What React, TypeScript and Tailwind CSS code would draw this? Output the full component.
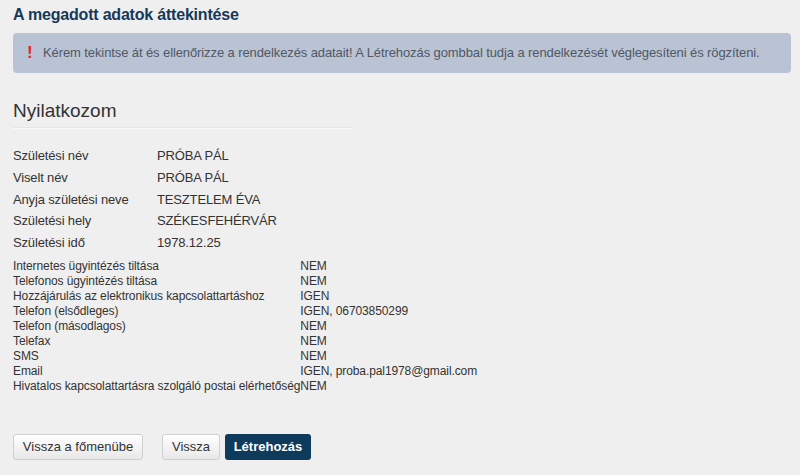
export default function App() {
  const personal = [
    ["Születési név", "PRÓBA PÁL"],
    ["Viselt név", "PRÓBA PÁL"],
    ["Anyja születési neve", "TESZTELEM ÉVA"],
    ["Születési hely", "SZÉKESFEHÉRVÁR"],
    ["Születési idő", "1978.12.25"],
  ];

  const contact = [
    ["Internetes ügyintézés tiltása", "NEM"],
    ["Telefonos ügyintézés tiltása", "NEM"],
    ["Hozzájárulás az elektronikus kapcsolattartáshoz", "IGEN"],
    ["Telefon (elsődleges)", "IGEN, 06703850299"],
    ["Telefon (másodlagos)", "NEM"],
    ["Telefax", "NEM"],
    ["SMS", "NEM"],
    ["Email", "IGEN, proba.pal1978@gmail.com"],
    ["Hivatalos kapcsolattartásra szolgáló postai elérhetőség", "NEM"],
  ];

  return (
    <div className="min-h-[475px] w-[800px] bg-[#efefef] px-[13px] pt-[5px] font-['Liberation_Sans',Arial,sans-serif] text-[#333]">
      <h1 className="text-[16px] font-bold leading-[20px] tracking-[-0.2px] text-[#15395a]">
        A megadott adatok áttekintése
      </h1>

      <div className="mt-[8px] flex h-[40px] w-[778px] items-center rounded-[4px] bg-[#bac3d4] pl-[14px] text-[13px] tracking-[-0.1px] text-[#4f5864]">
        <span className="w-[16px] text-[17px] font-bold text-[#e3262d]">!</span>
        <span>
          Kérem tekintse át és ellenőrizze a rendelkezés adatait! A Létrehozás gombbal tudja a rendelkezését véglegesíteni és rögzíteni.
        </span>
      </div>

      <h2 className="mt-[27px] text-[19px] leading-[21px] text-[#333]">Nyilatkozom</h2>
      <div className="mt-[6px] w-[339px] border-t border-[#e6e6e6] border-b border-b-[#f9f9f9]" />

      <div className="mt-[16px] text-[13px] tracking-[-0.15px]">
        {personal.map(([label, value]) => (
          <div key={label} className="flex leading-[21.75px]">
            <div className="w-[144px]">{label}</div>
            <div>{value}</div>
          </div>
        ))}
      </div>

      <div className="mt-[5px] grid w-fit grid-cols-[auto_auto] text-[12px] leading-[15px] tracking-[-0.1px]">
        {contact.map(([label, value]) => (
          <div key={label} className="contents">
            <div>{label}</div>
            <div>{value}</div>
          </div>
        ))}
      </div>

      <div className="mt-[40px] flex items-center text-[13px]">
        <button className="h-[26px] w-[130px] rounded-[3px] border border-[#cfcfcf] bg-gradient-to-b from-white to-[#e8e8e8] text-[#333]">
          Vissza a főmenübe
        </button>
        <button className="ml-[19px] h-[26px] w-[58px] rounded-[3px] border border-[#cfcfcf] bg-gradient-to-b from-white to-[#e8e8e8] text-[#333]">
          Vissza
        </button>
        <button className="ml-[5px] h-[26px] w-[86px] rounded-[3px] bg-[#0e3a5c] font-bold text-white">
          Létrehozás
        </button>
      </div>
    </div>
  );
}
